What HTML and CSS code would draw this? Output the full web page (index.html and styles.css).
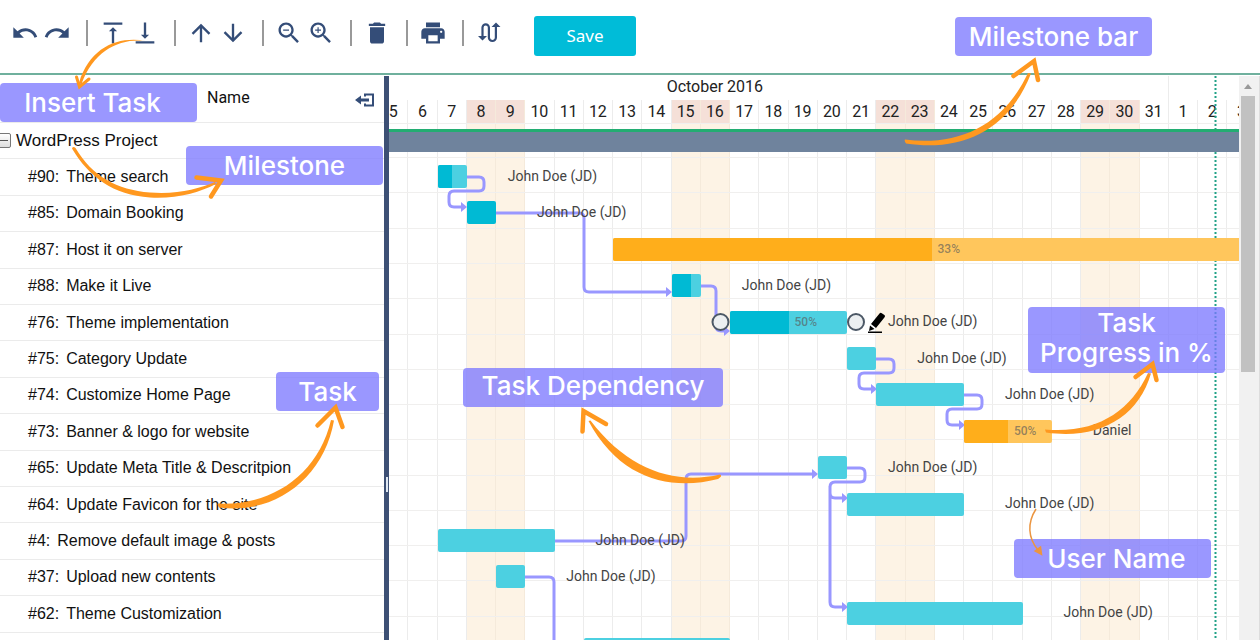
FILE: index.html
```html
<!DOCTYPE html>
<html lang="en">
<head>
<meta charset="utf-8">
<title>WordPress Project - Gantt</title>
<link rel="stylesheet" href="styles.css">
</head>
<body>
<div class="app">
  <header class="toolbar">
    <div class="tools">
      <button class="tool" aria-label="Undo"><svg viewBox="0 0 24 24"><path d="M12.5 8c-2.65 0-5.05.99-6.9 2.6L2 7v9h9l-3.62-3.62c1.39-1.16 3.16-1.88 5.12-1.88 3.54 0 6.55 2.31 7.6 5.5l2.37-.78C21.08 11.03 17.15 8 12.5 8z"/></svg></button>
      <button class="tool" aria-label="Redo"><svg viewBox="0 0 24 24"><path d="M18.4 10.6C16.55 8.99 14.15 8 11.5 8c-4.65 0-8.58 3.03-9.96 7.22L3.9 16c1.05-3.19 4.05-5.5 7.6-5.5 1.95 0 3.73.72 5.12 1.88L13 16h9V7l-3.6 3.6z"/></svg></button>
      <span class="sep"></span>
      <button class="tool" aria-label="Insert above"><svg viewBox="0 0 24 24"><path d="M8.5 10.5H11V21h2V10.500h2.500L12 7zM4 3v2h16V3H4z"/></svg></button>
      <button class="tool" aria-label="Insert below"><svg viewBox="0 0 24 24"><path d="M15.500 13.500H13V3h-2v10.500H8.500L12 17zM4 19v2h16v-2H4z"/></svg></button>
      <span class="sep"></span>
      <button class="tool" aria-label="Move up"><svg viewBox="0 0 24 24"><path d="M4 12l1.410 1.410L11 7.830V20h2V7.830l5.580 5.590L20 12l-8-8-8 8z"/></svg></button>
      <button class="tool" aria-label="Move down"><svg viewBox="0 0 24 24"><path d="M20 12l-1.410-1.410L13 16.170V4h-2v12.170l-5.580-5.590L4 12l8 8 8-8z"/></svg></button>
      <span class="sep"></span>
      <button class="tool" aria-label="Zoom out"><svg viewBox="0 0 24 24"><path d="M15.500 14h-.79l-.28-.27C15.410 12.590 16 11.110 16 9.500 16 5.910 13.090 3 9.500 3S3 5.910 3 9.500 5.910 16 9.500 16c1.610 0 3.090-.59 4.230-1.570l.27.28v.79l5 4.990L20.490 19l-4.990-5zm-6 0C7.010 14 5 11.990 5 9.500S7.010 5 9.500 5 14 7.010 14 9.500 11.990 14 9.500 14zM7 9h5v1H7z"/></svg></button>
      <button class="tool" aria-label="Zoom in"><svg viewBox="0 0 24 24"><path d="M15.500 14h-.79l-.28-.27C15.410 12.590 16 11.110 16 9.500 16 5.910 13.090 3 9.500 3S3 5.910 3 9.500 5.910 16 9.500 16c1.610 0 3.090-.59 4.230-1.570l.27.28v.79l5 4.990L20.490 19l-4.990-5zm-6 0C7.010 14 5 11.990 5 9.500S7.010 5 9.500 5 14 7.010 14 9.500 11.990 14 9.500 14zm2.500-4h-2v2H9v-2H7V9h2V7h1v2h2v1z"/></svg></button>
      <span class="sep"></span>
      <button class="tool" aria-label="Delete"><svg viewBox="0 0 24 24"><path d="M6 19c0 1.100.9 2 2 2h8c1.100 0 2-.9 2-2V7H6v12zM19 4h-3.500l-1-1h-5l-1 1H5v2h14V4z"/></svg></button>
      <span class="sep"></span>
      <button class="tool" aria-label="Print"><svg viewBox="0 0 24 24"><path d="M19 8H5c-1.660 0-3 1.340-3 3v6h4v4h12v-4h4v-6c0-1.660-1.340-3-3-3zm-3 11H8v-5h8v5zm3-7c-.55 0-1-.45-1-1s.45-1 1-1 1 .45 1 1-.45 1-1 1zm-1-9H6v4h12V3z"/></svg></button>
      <span class="sep"></span>
      <button class="tool" aria-label="Auto schedule"><svg viewBox="0 0 28 28"><path class="route" d="M7.500 18V8.500a3.200 3.200 0 0 1 6.400 0v10a3.500 3.500 0 0 0 7 0V8"/><path d="M3 17h9l-4.500 4.500zM16.500 8h9L21 3.500z"/></svg></button>
    </div>
    <button class="save">Save</button>
  </header>

  <main class="gantt">
    <section class="tree">
      <div class="tree-head">
        <span class="tree-title">Name</span>
        <button class="collapse" aria-label="Collapse panel"><svg viewBox="0 0 20 16"><path class="bracket" d="M10 4.500V2.500h8v11h-8v-2"/><path d="M0 8l6-4.500v3h8v3H6v3z"/></svg></button>
      </div>
      <ul class="rows">
        <li class="row root"><button class="toggle" aria-label="Collapse project"></button>WordPress Project</li>
        <li class="row"><span>#90:</span> Theme search</li>
        <li class="row"><span>#85:</span> Domain Booking</li>
        <li class="row"><span>#87:</span> Host it on server</li>
        <li class="row"><span>#88:</span> Make it Live</li>
        <li class="row"><span>#76:</span> Theme implementation</li>
        <li class="row"><span>#75:</span> Category Update</li>
        <li class="row"><span>#74:</span> Customize Home Page</li>
        <li class="row"><span>#73:</span> Banner &amp; logo for website</li>
        <li class="row"><span>#65:</span> Update Meta Title &amp; Descritpion</li>
        <li class="row"><span>#64:</span> Update Favicon for the site</li>
        <li class="row"><span>#4:</span> Remove default image &amp; posts</li>
        <li class="row"><span>#37:</span> Upload new contents</li>
        <li class="row"><span>#62:</span> Theme Customization</li>
        <li class="row"></li>
      </ul>
    </section>

    <div class="splitter"><span class="grip"></span></div>

    <section class="chart">
      <div class="canvas">
        <div class="days">
          <div class="day"></div><div class="day"></div><div class="day"></div><div class="day"></div>
          <div class="day"><b>5</b></div><div class="day"><b>6</b></div><div class="day"><b>7</b></div>
          <div class="day off"><b>8</b></div><div class="day off"><b>9</b></div>
          <div class="day"><b>10</b></div><div class="day"><b>11</b></div><div class="day"><b>12</b></div><div class="day"><b>13</b></div><div class="day"><b>14</b></div>
          <div class="day off"><b>15</b></div><div class="day off"><b>16</b></div>
          <div class="day"><b>17</b></div><div class="day"><b>18</b></div><div class="day"><b>19</b></div><div class="day"><b>20</b></div><div class="day"><b>21</b></div>
          <div class="day off"><b>22</b></div><div class="day off"><b>23</b></div>
          <div class="day"><b>24</b></div><div class="day"><b>25</b></div><div class="day"><b>26</b></div><div class="day"><b>27</b></div><div class="day"><b>28</b></div>
          <div class="day off"><b>29</b></div><div class="day off"><b>30</b></div>
          <div class="day"><b>31</b></div><div class="day"><b>1</b></div><div class="day"><b>2</b></div><div class="day"><b>3</b></div>
        </div>
        <div class="months"><div class="month">October 2016</div></div>
        <svg class="links" viewBox="262 76 1404 592">
          <path class="rule" d="M262 123.500h1404M262 157.500h1404M262 192.500h1404M262 228.500h1404M262 263.500h1404M262 298.500h1404M262 334.500h1404M262 369.500h1404M262 404.500h1404M262 439.500h1404M262 475.500h1404M262 510.500h1404M262 545.500h1404M262 580.500h1404M262 616.500h1404"/>
          <path class="today" d="M1215.500 76V668"/>
          <g id="hook"><path class="link" d="M466 177H479q5 0 5 5v4q0 5-5 5H454q-5 0-5 5v6q0 5 5 5h8"/><path class="tip" d="M461 202l6 5-6 5z"/></g>
          <use href="#hook" x="410" y="182"/>
          <use href="#hook" x="498" y="218"/>
          <path class="link" d="M495 213H579q5 0 5 5V287q0 5 5 5H667M700 286H711q5 0 5 5V326q0 5 5 5H726M554 541H681q5 0 5-5V479q0-5 5-5H813M847 468H860q5 0 5 5v4q0 5-5 5H835q-5 0-5 5v6q0 5 5 5H843M830 486V602q0 5 5 5H843M525 577H549q5 0 5 5V668"/>
          <path class="tip" d="M666 287l6 5-6 5zM724 326l6 5-6 5zM812 469l6 5-6 5zM842 493l6 5-6 5zM842 602l6 5-6 5z"/>
        </svg>
        <div class="bars">
          <div class="line"><div class="milestone"></div></div>
          <div class="line"><div class="bar d7 n1"><i class="p50"></i></div><span class="who">John Doe (JD)</span></div>
          <div class="line"><div class="bar d8 n1"><i class="p100"></i></div><span class="who">John Doe (JD)</span></div>
          <div class="line"><div class="bar gold d13 n33"><i class="p33"></i><span class="pct">33%</span></div></div>
          <div class="line"><div class="bar d15 n1"><i class="p66"></i></div><span class="who">John Doe (JD)</span></div>
          <div class="line"><div class="bar d17 n4"><i class="p50"></i><span class="pct">50%</span></div><span class="who">John Doe (JD)</span></div>
          <div class="line"><div class="bar d21 n1"></div><span class="who">John Doe (JD)</span></div>
          <div class="line"><div class="bar d22 n3"></div><span class="who">John Doe (JD)</span></div>
          <div class="line"><div class="bar gold d25 n3"><i class="p50"></i><span class="pct">50%</span></div><span class="who">Daniel</span></div>
          <div class="line"><div class="bar d20 n1"></div><span class="who">John Doe (JD)</span></div>
          <div class="line"><div class="bar d21 n4"></div><span class="who">John Doe (JD)</span></div>
          <div class="line"><div class="bar d7 n4"></div><span class="who">John Doe (JD)</span></div>
          <div class="line"><div class="bar d9 n1"></div><span class="who">John Doe (JD)</span></div>
          <div class="line"><div class="bar d21 n6"></div><span class="who">John Doe (JD)</span></div>
          <div class="line"><div class="bar d12 n5"></div></div>
        </div>
        <svg class="links" viewBox="262 76 1404 592">
          <circle class="knob" cx="720.500" cy="322" r="8"/>
          <circle class="knob" cx="856" cy="322" r="8"/>
          <path class="pencil" d="M871 324l8.500-10.500q1-1.200 2.300-.3l2.600 1.900q1.200 1 .2 2.200L876 328zM870 325.500l4.500 3.500-5.500 2zM868 331.500h14v1.500h-14z"/>
        </svg>
      </div>
    </section>

    <div class="scrollbar"><svg class="up" viewBox="0 0 10 6"><path d="M5 0l4 5H1z"/></svg><span class="thumb"></span></div>
  </main>

  <div class="note insert">Insert Task</div>
  <div class="note stone">Milestone</div>
  <div class="note stonebar">Milestone bar</div>
  <div class="note task">Task</div>
  <div class="note depend">Task Dependency</div>
  <div class="note progress">Task<br>Progress in %</div>
  <div class="note user">User Name</div>

  <svg class="arrows" viewBox="0 0 1260 640">
    <path d="M146 41C120 38 94 50 81.500 84L79 83C90 47 118 36 146 41z"/>
    <path class="head thin" d="M76.500 77L79.500 87L89 79"/>
    <path d="M72 148.500Q73 146 75.500 148C92 176 117 190 150 192.500C178 194.500 198 189 215 182L216 184C198 193 176 199 150 197.500C113 195 89 177 72 148.500z"/>
    <path class="head" d="M196.500 177.500L221 180.500L211 196.500"/>
    <path d="M905 139.500C956 146 1002 128 1028 73L1031 73.500C1009 130 962 152 906 143.500Q904 141 905 139.500z"/>
    <path class="head" d="M1013.500 76L1034 61L1038 80"/>
    <path d="M218 503.500C272 506 318 475 331 420L334 420.500C324 478 275 515 219 507.500Q217 505 218 503.500z"/>
    <path class="head" d="M317.500 425.500L335.500 407.500L342.500 427"/>
    <path d="M720 474.500C675 485 628 470 590.500 420.500L588.500 421C620 480 672 491 718 479Q723 476 720 474.500z"/>
    <path class="head" d="M582.500 431.500L583.500 411L606 424"/>
    <path d="M1045 429.500C1096 434 1130 412 1148 373L1151 373.500C1138 418 1098 440 1046 432.500z"/>
    <path class="head" d="M1135.500 377L1152.500 364L1156.500 380"/>
    <path class="fine" d="M1036 509C1027 523 1028 538 1038 550"/>
    <path class="fine solid" d="M1035 551L1040.500 547L1041.500 554.500z"/>
  </svg>
</div>
</body>
</html>
```
FILE: styles.css
```css
* { box-sizing: border-box; }

body {
  margin: 0;
  background: #fff;
  color: #222;
  font-family: Roboto, "Liberation Sans", sans-serif;
  font-size: 16px;
}

button {
  margin: 0;
  padding: 0;
  border: 0;
  background: none;
  font: inherit;
}

svg { display: block; }

.app {
  position: relative;
  display: flex;
  flex-direction: column;
  height: 100vh;
  overflow: hidden;
}

/* Toolbar */
.toolbar {
  display: flex;
  flex: none;
  align-items: flex-start;
  padding: 16px 9px 17px;
  border-bottom: 2px solid #6fb09d;
}

.tools {
  display: flex;
  align-items: center;
  padding-top: 3px;
}

.tool {
  display: flex;
  justify-content: center;
  width: 32px;
}

.tool svg {
  width: 28px;
  height: 28px;
  fill: #344d78;
}

.tool .route {
  fill: none;
  stroke: #344d78;
  stroke-width: 2.2;
}

.sep {
  width: 2px;
  height: 26px;
  margin: 0 9px 0 13px;
  background: #999;
}

.save {
  width: 102px;
  height: 40px;
  margin-left: 29px;
  border-radius: 3px;
  background: #00bcd8;
  color: #fff;
  font-family: "Noto Sans", sans-serif;
  font-size: 17px;
  line-height: 38px;
}

/* Task tree */
.gantt {
  display: flex;
  flex: 1;
  min-height: 0;
  padding-top: 1px;
}

.tree {
  flex: none;
  width: 384px;
  overflow: hidden;
  color: #111;
  font-family: "Liberation Sans", Arial, sans-serif;
}

.tree-head {
  display: flex;
  align-items: center;
  justify-content: space-between;
  height: 47px;
  padding: 0 9px 4px 207px;
  border-bottom: 1px solid #ebebeb;
  font-family: Roboto, sans-serif;
}

.collapse {
  padding-top: 6px;
}

.collapse svg {
  width: 20px;
  height: 16px;
  fill: #344d78;
}

.collapse .bracket {
  fill: none;
  stroke: #344d78;
  stroke-width: 2;
}

.rows,
.bars {
  display: grid;
  grid-template-rows: repeat(15, 1fr);
  height: 546px;
}

.rows {
  margin: 0;
  padding: 0;
  list-style: none;
}

.row {
  display: flex;
  align-items: center;
  gap: 7px;
  padding-left: 28px;
  border-bottom: 1px solid #ebebeb;
  white-space: nowrap;
}

.root {
  gap: 5px;
  padding-left: 0;
  font-size: 17px;
}

.toggle {
  width: 15px;
  height: 15px;
  margin-left: -4px;
  border: 1px solid #777;
  border-radius: 2px;
  background: linear-gradient(#fff, #ddd);
}

.toggle::after {
  content: "";
  display: block;
  height: 1px;
  margin: 0 2px;
  background: #555;
}

.splitter {
  display: flex;
  flex: none;
  align-items: center;
  justify-content: center;
  width: 5px;
  padding-top: 252px;
  background: #3d5075;
}

.grip {
  width: 2px;
  height: 15px;
  background: #dfe8f3;
}

/* Timeline */
.chart {
  flex: 1;
  min-width: 0;
  overflow: hidden;
}

.canvas {
  display: grid;
  width: 1404px;
  margin-left: -127px;
}

.canvas > * {
  grid-area: 1 / 1;
  min-width: 0;
}

.days,
.months {
  display: grid;
  grid-template-columns: repeat(48, 1fr);
}

.days { padding-top: 24px; }

.day {
  border-right: 1px solid #ececec;
}

.day b {
  display: flex;
  align-items: center;
  justify-content: center;
  height: 23px;
  font-weight: 400;
}

.off {
  border-right-color: #f5eadb;
  background: #fdf3e5;
}

.off b {
  background: #f5e0d8;
}

.month {
  grid-column: 1 / 32;
  height: 24px;
  border-right: 1px solid #ececec;
  line-height: 22px;
  text-align: center;
}

.links {
  width: 1404px;
  height: 592px;
}

.rule { stroke: #f0efee; }

.today {
  stroke: #22a287;
  stroke-width: 2;
  stroke-dasharray: 2 2;
}

.link {
  fill: none;
  stroke: #9997ff;
  stroke-width: 3;
}

.tip { fill: #9997ff; }

.bars { margin-top: 46px; }

.line {
  display: grid;
  grid-template-columns: repeat(48, 1fr);
  align-items: center;
}

.milestone {
  grid-column: 1 / -1;
  height: 23px;
  border-top: 3px solid #23ad72;
  background: #6f839d;
}

.bar {
  display: flex;
  align-items: center;
  grid-row: 1;
  height: 23px;
  overflow: hidden;
  border-radius: 2px;
  background: #4cd0e1;
}

.bar i {
  flex: none;
  align-self: stretch;
  background: #00bad4;
}

.gold { background: #ffc65c; }
.gold i { background: #ffae1b; }

.pct {
  padding-left: 6px;
  color: rgba(90, 90, 90, .65);
  font-size: 12px;
  font-weight: 500;
}

.who {
  grid-row: 1;
  padding: 0 0 2px 41px;
  color: #444;
  font-size: 14px;
  white-space: nowrap;
}

.p33 { width: 33%; }
.p50 { width: 50%; }
.p66 { width: 66%; }
.p100 { width: 100%; }

.d7 { grid-column-start: 7; }
.d8 { grid-column-start: 8; }
.d9 { grid-column-start: 9; }
.d12 { grid-column-start: 12; }
.d13 { grid-column-start: 13; }
.d15 { grid-column-start: 15; }
.d17 { grid-column-start: 17; }
.d20 { grid-column-start: 20; }
.d21 { grid-column-start: 21; }
.d22 { grid-column-start: 22; }
.d25 { grid-column-start: 25; }

.n1 { grid-column-end: span 1; }
.n3 { grid-column-end: span 3; }
.n4 { grid-column-end: span 4; }
.n5 { grid-column-end: span 5; }
.n6 { grid-column-end: span 6; }
.n33 { grid-column-end: span 33; }

.line .who { grid-column-end: span 6; }

.d7.n1 + .who { grid-column-start: 8; }
.d8.n1 + .who { grid-column-start: 9; }
.d9.n1 + .who { grid-column-start: 10; }
.d7.n4 + .who { grid-column-start: 11; }
.d15.n1 + .who { grid-column-start: 16; }
.d17.n4 + .who,
.d20.n1 + .who { grid-column-start: 21; }
.d21.n1 + .who { grid-column-start: 22; }
.d22.n3 + .who,
.d21.n4 + .who { grid-column-start: 25; }
.d21.n6 + .who { grid-column-start: 27; }
.d25.n3 + .who { grid-column-start: 28; }

.knob {
  fill: #eceff1;
  stroke: #4c5866;
  stroke-width: 2;
}

.pencil { fill: #000; }

.scrollbar {
  display: flex;
  flex: none;
  flex-direction: column;
  gap: 6px;
  width: 21px;
  padding: 8px 4px 0 2px;
  border-right: 1px solid #ddd;
  background: #f1f1f1;
}

.up {
  align-self: center;
  width: 10px;
  height: 6px;
  fill: #999;
}

.thumb {
  height: 276px;
  background: #c1c1c1;
}

/* Callouts */
.note {
  position: absolute;
  display: flex;
  align-items: center;
  justify-content: center;
  width: 197px;
  height: 39px;
  border-radius: 4px;
  background: rgba(123, 120, 255, .77);
  color: #fff;
  font-family: Inter, sans-serif;
  font-size: 26px;
  font-weight: 500;
  line-height: 30px;
  text-align: center;
  white-space: nowrap;
}

.insert { left: 0; top: 83px; padding-right: 12px; }
.stone { left: 186px; top: 146px; }
.stonebar { left: 955px; top: 17px; }
.task { left: 276px; top: 372px; width: 103px; }
.depend { left: 463px; top: 368px; width: 260px; padding-bottom: 4px; }
.progress { left: 1028px; top: 307px; height: 66px; padding-bottom: 4px; }
.user { left: 1014px; top: 539px; padding-left: 8px; }

.arrows {
  position: absolute;
  left: 0;
  top: 0;
  width: 1260px;
  height: 640px;
  fill: #ff981f;
  pointer-events: none;
}

.head {
  fill: none;
  stroke: #ff981f;
  stroke-width: 4.5;
  stroke-linecap: round;
}

.head.thin { stroke-width: 3; }

.fine {
  fill: none;
  stroke: #eb9540;
  stroke-width: 1.5;
}

.fine.solid { fill: #eb9540; }
```
